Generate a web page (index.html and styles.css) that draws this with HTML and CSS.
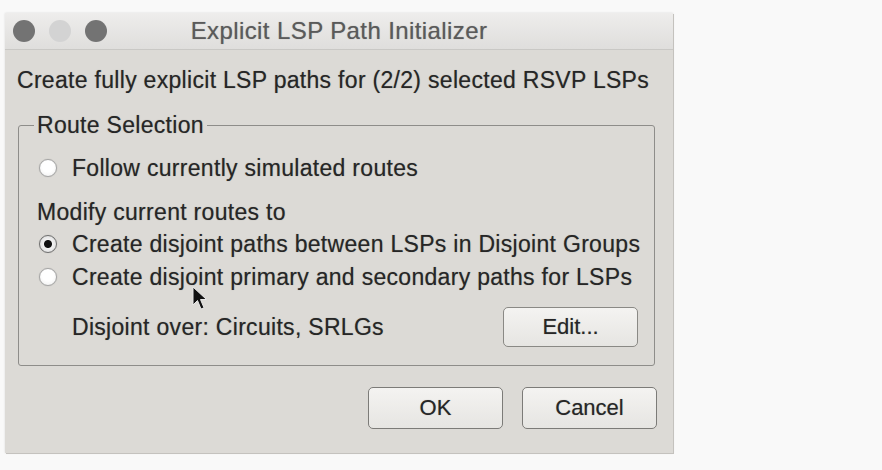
FILE: index.html
```html
<!DOCTYPE html>
<html>
<head>
<meta charset="utf-8">
<link rel="stylesheet" href="styles.css">
</head>
<body>
<div class="window">
  <div class="titlebar">
    <div class="lights">
      <span class="light dark"></span>
      <span class="light pale"></span>
      <span class="light dark"></span>
    </div>
    <div class="title">Explicit LSP Path Initializer</div>
    <div></div>
  </div>
  <div class="content">
    <div class="intro">Create fully explicit LSP paths for (2/2) selected RSVP LSPs</div>
    <fieldset class="group">
      <legend>Route Selection</legend>
      <div class="row first"><span class="radio"></span><span>Follow currently simulated routes</span></div>
      <div class="sub">Modify current routes to</div>
      <div class="row r2"><span class="radio checked"></span><span>Create disjoint paths between LSPs in Disjoint Groups</span></div>
      <div class="row r3"><span class="radio"></span><span>Create disjoint primary and secondary paths for LSPs</span></div>
      <div class="over">
        <span>Disjoint over: Circuits, SRLGs</span>
        <button class="btn edit">Edit...</button>
      </div>
    </fieldset>
    <div class="actions">
      <button class="btn big">OK</button>
      <button class="btn big">Cancel</button>
    </div>
  </div>
  <svg class="cursor" width="16" height="26" viewBox="0 0 16 26">
    <path d="M1 1 L1 19 L5.5 14.5 L9 23 L12 21.8 L8.5 13.5 L14.5 13.5 Z" fill="#111" stroke="#e8e8e8" stroke-width="1"/>
  </svg>
</div>
</body>
</html>
```
FILE: styles.css
```css
html, body {
  margin: 0;
  padding: 0;
  background: #f9f9f9;
  height: 470px;
  overflow: hidden;
}
body {
  font-family: "Liberation Sans", Arial, sans-serif;
  color: #262626;
}
.window {
  position: relative;
  margin: 13px 0 0 5px;
  width: 668px;
  height: 440px;
  background: #dcdad6;
  box-shadow: 1px 1px 0 #c4c2be, 0 0 2px rgba(0,0,0,0.12);
  display: flex;
  flex-direction: column;
  text-shadow: 0 0 1px rgba(0,0,0,0.35);
}
.titlebar {
  height: 37px;
  background: linear-gradient(#eeedec, #dfdedc);
  border-bottom: 1px solid #c9c8c5;
  display: grid;
  grid-template-columns: 1fr auto 1fr;
  align-items: center;
  box-sizing: border-box;
}
.lights {
  display: flex;
  gap: 14px;
  padding-left: 8px;
}
.light {
  width: 22px;
  height: 22px;
  border-radius: 50%;
  display: block;
}
.light.dark { background: #737373; }
.light.pale { background: #d3d3d3; }
.title {
  font-size: 24px;
  letter-spacing: 0.4px;
  color: #5a5a5a;
}
.content {
  padding: 18px 16px 0 12px;
  display: flex;
  flex-direction: column;
}
.intro {
  font-size: 23px;
  letter-spacing: 0.3px;
  line-height: 24px;
  height: 24px;
  white-space: nowrap;
}
.group {
  margin: 21px 2px 0 1px;
  padding: 0 16px 18px 18px;
  border: 1px solid #8e8d8a;
  border-radius: 3px;
  font-size: 23px;
  letter-spacing: 0.3px;
  min-width: 0;
  display: flex;
  flex-direction: column;
}
.group legend {
  padding: 0 3px;
  margin-left: -3px;
  line-height: 24px;
  font-size: 23px;
}
.row {
  display: flex;
  align-items: center;
  height: 24px;
  line-height: 24px;
  white-space: nowrap;
  gap: 15px;
  margin-left: 2px;
}
.row.first { margin-top: 19px; }
.sub { margin-top: 20px; line-height: 24px; height: 24px; white-space: nowrap; }
.row.r2 { margin-top: 8px; }
.row.r3 { margin-top: 9px; }
.radio {
  width: 18px;
  height: 18px;
  border-radius: 50%;
  box-sizing: border-box;
  border: 1px solid #a5a5a5;
  background: radial-gradient(circle at 50% 40%, #ffffff 45%, #ececec 100%);
  box-shadow: 0 0 1px rgba(0,0,0,0.25);
  flex: none;
}
.radio.checked {
  border-color: #6f6f6f;
  background: radial-gradient(circle, #111 0 3.5px, #f2f2f2 4.5px, #d6d6d6 100%);
}
.over {
  margin-top: 18px;
  display: flex;
  align-items: center;
  justify-content: space-between;
  padding-left: 35px;
  height: 40px;
  white-space: nowrap;
}
.btn {
  font-family: "Liberation Sans", Arial, sans-serif;
  font-size: 22px;
  color: #262626;
  text-shadow: 0 0 1px rgba(0,0,0,0.35);
  background: linear-gradient(#f4f3f1, #e6e5e2);
  border: 1px solid #8a8985;
  border-radius: 5px;
  padding: 0;
}
.btn.edit {
  width: 135px;
  height: 40px;
}
.actions {
  margin-top: 21px;
  display: flex;
  justify-content: flex-end;
  gap: 19px;
}
.btn.big {
  width: 135px;
  height: 42px;
  border-color: #7c7b78;
}
.cursor {
  position: absolute;
  left: 187px;
  top: 273px;
}
```
